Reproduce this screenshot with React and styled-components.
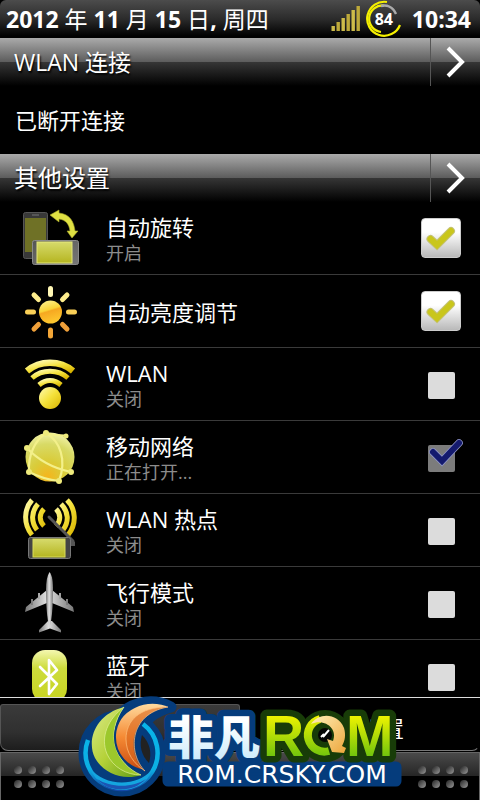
import React from 'react';
import styled, { createGlobalStyle } from 'styled-components';

const GlobalStyle = createGlobalStyle`
  * {
    box-sizing: border-box;
  }

  body {
    margin: 0;
    background: #000;
    color: #fff;
    font-family: 'Open Sans', 'Noto Sans CJK SC', sans-serif;
  }
`

const Screen = styled.div`
  position: relative;
  display: flex;
  flex-direction: column;
  height: 100vh;
  overflow: hidden;
`

const StatusBar = styled.header`
  display: flex;
  align-items: center;
  flex: none;
  height: 38px;
  padding: 0 9px 0 6px;
  border-radius: 6px 6px 0 0;
  background: linear-gradient(#4c4c4c, #2b2b2b 50%, #000 95%);
  font-size: 23px;
  line-height: 38px;
  white-space: nowrap;
`

const DateText = styled.div`
  flex: 1;

  b {
    font-weight: 700;
  }
`

const Clock = styled.b`
  margin-left: 9px;
`

const Battery = styled.div`
  display: grid;
  place-items: center;
  width: 38px;
  height: 38px;
  margin-left: 4px;
  font-size: 16px;
  font-weight: 700;

  > * {
    grid-area: 1 / 1;
  }
`

const SectionBar = styled.div`
  display: flex;
  flex: none;
  height: 48px;
  background: linear-gradient(#aaa, #5c5c5c 50%, #363636 50%, #000);
`

const SectionTitle = styled.h2`
  flex: 1;
  margin: 0;
  padding-left: 14px;
  font-size: ${props => props.$latin ? 23 : 24}px;
  font-weight: 400;
  line-height: 48px;
  text-shadow: 1px 2px 2px #000;
`

const MoreButton = styled.button`
  display: grid;
  place-items: center;
  width: 50px;
  padding: 0;
  border: 0;
  border-left: 1px solid #555;
  background: none;
`

const Connection = styled.p`
  flex: none;
  margin: 0;
  padding: 0 15px;
  height: 68px;
  font-size: 22px;
  line-height: 68px;
`

const List = styled.main`
  flex: 1;
  min-height: 0;
  overflow: hidden;
`

const Row = styled.label`
  display: flex;
  align-items: center;
  height: 73px;
  padding: 0 19px 0 20px;
  border-bottom: 1px solid #3a3a3a;
`

const RowText = styled.span`
  flex: 1;
  display: flex;
  flex-direction: column;
  margin-left: 26px;
  padding-top: 2px;
`

const Title = styled.span`
  font-size: 22px;
  line-height: 28px;
`

const Note = styled.span`
  font-size: 18px;
  line-height: 24px;
  color: #8c8c8c;
`

const CheckSlot = styled.span`
  position: relative;
  display: grid;
  place-items: center;
  width: 40px;
  height: 40px;

  svg {
    position: absolute;
    inset: 0;
    overflow: visible;
    pointer-events: none;
  }
`

const Check = styled.input`
  appearance: none;
  width: 27px;
  height: 27px;
  margin: 2px 0 0;
  border-radius: 2px;
  background: #dcdcdc;

  &:checked {
    width: 40px;
    height: 40px;
    margin: 0;
    border: 1px solid #ccc;
    border-radius: 4px;
    background: linear-gradient(#fff 35%, #b9b9b9);
  }

  &:disabled {
    width: 27px;
    height: 27px;
    margin: 2px 0 0;
    border: 0;
    border-radius: 2px;
    background: #7c7c7c;
  }
`

const Tabs = styled.nav`
  display: flex;
  flex: none;
  height: 55px;
  padding: 6px 0 1px;
  border-top: 1px solid #ddd;
`

const Tab = styled.button`
  flex: 1;
  padding: 0;
  border: 1px solid ${props => props.$active ? '#555' : '#000'};
  border-bottom-color: #777;
  border-radius: 3px 3px 8px 8px;
  background: ${props => props.$active ? 'linear-gradient(#3a3a3a, #303030 60%, #1d1d1d)' : '#000'};
  color: #fff;
  font-family: inherit;
  font-size: 22px;
  line-height: 44px;
`

const Tray = styled.footer`
  display: flex;
  justify-content: space-between;
  flex: none;
  height: 48px;
  padding: 13px 11px 0;
  border: 1px solid #666;
  border-bottom: 0;
  background: linear-gradient(#4a4a4a, #262626 48%, #000 48%);
`

const Grip = styled.span`
  display: grid;
  grid-template-columns: repeat(4, 8px);
  grid-auto-rows: 8px;
  gap: 6px;
  padding-left: 2px;
`

const Dot = styled.i`
  border-radius: 50%;
  background: linear-gradient(135deg, #222, #999);
`

const Brand = styled.svg`
  position: absolute;
  left: 50%;
  bottom: 0;
  transform: translateX(-50%);
`

const Defs = () => (
  <svg width="0" height="0" style={{ position: 'absolute' }} aria-hidden="true">
    <defs>
      <linearGradient id="gold" x1="0" y1="0" x2="1" y2="1">
        <stop offset="0" stopColor="#fffbb0" />
        <stop offset=".5" stopColor="#f4e13a" />
        <stop offset="1" stopColor="#d9b400" />
      </linearGradient>
      <linearGradient id="sun" x1="0" y1="0" x2=".3" y2="1">
        <stop offset="0" stopColor="#fff59a" />
        <stop offset=".48" stopColor="#fbd436" />
        <stop offset=".55" stopColor="#f6a821" />
        <stop offset="1" stopColor="#fdc52e" />
      </linearGradient>
      <linearGradient id="glass" x1="0" y1="0" x2="0" y2="1">
        <stop offset="0" stopColor="#d6da6b" />
        <stop offset="1" stopColor="#b5b520" />
      </linearGradient>
      <linearGradient id="case" x1="0" y1="0" x2="1" y2="1">
        <stop offset="0" stopColor="#555" />
        <stop offset="1" stopColor="#777" />
      </linearGradient>
      <radialGradient id="globe" cx=".45" cy=".9" r=".95">
        <stop offset="0" stopColor="#f5b51c" />
        <stop offset=".35" stopColor="#d9cc3a" />
        <stop offset=".7" stopColor="#d8da66" />
        <stop offset="1" stopColor="#f6f6b4" />
      </radialGradient>
      <linearGradient id="metal" x1="0" y1="0" x2="1" y2="0">
        <stop offset="0" stopColor="#777" />
        <stop offset=".45" stopColor="#e2e2e2" />
        <stop offset="1" stopColor="#777" />
      </linearGradient>
      <linearGradient id="lime" x1="0" y1="0" x2="0" y2="1">
        <stop offset="0" stopColor="#f4f7b0" />
        <stop offset=".35" stopColor="#cddc3c" />
        <stop offset="1" stopColor="#c8d420" />
      </linearGradient>
    </defs>
  </svg>
)

const Icon = ({ children }) => (
  <svg width="60" height="64" viewBox="0 0 60 64" fill="none" aria-hidden="true">{children}</svg>
)

const RotateIcon = () => (
  <Icon>
    <rect x="3.500" y="6.500" width="24" height="46" rx="2" fill="#383838" stroke="#555" />
    <rect x="5" y="12" width="21" height="34" fill="#6f7126" />
    <path d="M12 9h7" stroke="#777" />
    <rect x="12.500" y="34.500" width="46" height="24" rx="2" fill="url(#case)" stroke="#8a8a8a" />
    <rect x="17" y="36" width="35" height="21" fill="url(#glass)" stroke="#e5e87b" />
    <path d="M30 9l9-5v3c11 1 15 9 16 18h3l-6 7-5-7h3c-1-7-4-11-11-12v3z" fill="#dfe043" stroke="#a9a92a" strokeWidth=".6" />
  </Icon>
)

const BrightnessIcon = () => (
  <Icon>
    <circle cx="30.500" cy="33" r="11.500" fill="url(#sun)" />
    <g strokeWidth="5" strokeLinecap="round">
      <path d="M30.500 9.500v6" stroke="#fff7b5" />
      <path d="M14 16l4.500 4.500M47 16l-4.500 4.500" stroke="#fdec8c" />
      <path d="M7.500 33h6M48.500 33h6" stroke="#f9cf57" />
      <path d="M14 50l4.500-4.500M47 50l-4.500-4.500" stroke="#f0a03a" />
      <path d="M30.500 51v6" stroke="#f3a637" />
    </g>
  </Icon>
)

const WifiIcon = () => (
  <Icon>
    <circle cx="30" cy="46" r="11" fill="url(#gold)" />
    <g stroke="url(#gold)" strokeWidth="5">
      <path d="M7 19c13-11 33-11 46 0" strokeWidth="6.500" />
      <path d="M12 26c10-9 26-9 36 0" />
      <path d="M19 33c7-6 15-6 22 0" />
    </g>
  </Icon>
)

const GlobeIcon = () => (
  <Icon>
    <circle cx="30" cy="32" r="24.500" fill="url(#globe)" />
    <g stroke="#f3f08a" strokeWidth="2.200">
      <path d="M7 23c12 13 25 20 44 24" />
      <path d="M26 8c14 8 21 27 13 48" />
      <path d="M26 8C15 15 8 30 9 47" />
      <path d="M26 8c8 3 17 2 20 3" />
      <path d="M9 47c8 4 20 8 30 9" />
    </g>
    <g fill="#eeea7c">
      <circle cx="26" cy="8" r="3" />
      <circle cx="46" cy="11" r="2.500" />
      <circle cx="7" cy="23" r="3" />
      <circle cx="9" cy="47" r="3" />
      <circle cx="51" cy="47" r="3" />
      <circle cx="39" cy="56" r="3" />
    </g>
  </Icon>
)

const HotspotIcon = () => (
  <Icon>
    <g stroke="url(#gold)" strokeWidth="5">
      <path d="M12 2C4 11 3 26 12 37M18 6c-7 8-7 18-1 26M24 11c-5 5-5 12 0 17" />
      <path d="M47 2c9 9 10 24 1 35M41 6c8 8 8 18 2 26M36 11c5 5 5 12 0 17" />
    </g>
    <path d="M29 19l24 24" stroke="#555" strokeWidth="3" strokeLinecap="round" />
    <path d="M46 36l9 8v4h-6z" fill="#555" />
    <rect x="8.500" y="39.500" width="42" height="21" rx="2" fill="#444" stroke="#777" />
    <rect x="13" y="41" width="32" height="18" fill="url(#glass)" stroke="#dadd5a" />
  </Icon>
)

const PlaneIcon = () => (
  <Icon>
    <g fill="url(#metal)">
      <path d="M27 19L6 36l-1 5 22-9zM32 19l21 17 1 5-22-9z" />
      <path d="M11 28h2v6h-2zM18 22h2v6h-2zM46 28h2v6h-2zM39 22h2v6h-2z" />
      <path d="M28 50l-9 9v2.500l11-4 11 4V59l-9-9z" />
      <path d="M29.500 1c3 4 3.500 10 3.500 18 0 15-1 29-3.500 38C27 48 26 34 26 19c0-8 1-14 3.500-18z" />
    </g>
  </Icon>
)

const BluetoothIcon = () => (
  <Icon>
    <rect x="12" y="6" width="35" height="52" rx="13" fill="url(#lime)" />
    <path d="M20 23l17 17-8 10V16l8 10-17 16" stroke="#fff" strokeWidth="2.600" strokeLinejoin="round" strokeLinecap="round" />
  </Icon>
)

const Tick = ({ dark }) => dark ? (
  <svg viewBox="0 0 40 40" fill="none" aria-hidden="true">
    <path d="M12 15l9 9L38 6" stroke="#8d93c4" strokeWidth="7.600" strokeLinecap="round" />
    <path d="M12 15l9 9L38 6" stroke="#141a6e" strokeWidth="6" strokeLinecap="round" />
  </svg>
) : (
  <svg viewBox="0 0 40 40" fill="none" aria-hidden="true">
    <path d="M9.500 21l6.500 6 14-14" stroke="#c4c27a" strokeWidth="8" strokeLinecap="round" />
    <path d="M9.500 21l6.500 6 14-14" stroke="#c9c61c" strokeWidth="6" strokeLinecap="round" />
  </svg>
)

const Setting = ({ icon, title, note, checked, disabled }) => (
  <Row>
    {icon}
    <RowText>
      <Title>{title}</Title>
      {note && <Note>{note}</Note>}
    </RowText>
    <CheckSlot>
      <Check type="checkbox" defaultChecked={checked} disabled={disabled} />
      {checked && <Tick dark={disabled} />}
    </CheckSlot>
  </Row>
)

const Section = ({ title, latin }) => (
  <SectionBar>
    <SectionTitle $latin={latin}>{title}</SectionTitle>
    <MoreButton aria-label={title}>
      <svg width="24" height="34" viewBox="0 0 24 34" fill="none">
        <path d="M4 3l14 14L4 31" stroke="#fff" strokeWidth="4" />
      </svg>
    </MoreButton>
  </SectionBar>
)

const Signal = () => (
  <svg width="30" height="26" viewBox="0 0 30 26" aria-hidden="true">
    {[5, 9, 13, 17, 21, 25].map((height, i) => (
      <rect key={height} x={i * 5 + 0.5} y={25 - height} width="3.400" height={height} fill={i % 2 ? '#bda93a' : '#cdbb4a'} />
    ))}
  </svg>
)

const Dots = () => (
  <Grip>
    {[...Array(8).keys()].map(i => <Dot key={i} />)}
  </Grip>
)

const Logo = () => (
  <Brand width="324" height="105" viewBox="78 695 324 105" fill="none">
    <defs>
      <linearGradient id="ring" x1="0" y1="0" x2="0" y2="1">
        <stop offset="0" stopColor="#08b4ea" />
        <stop offset=".7" stopColor="#0cb0e4" />
        <stop offset="1" stopColor="#1248a8" />
      </linearGradient>
      <linearGradient id="leaf" x1="0" y1="0" x2="1" y2="1">
        <stop offset="0" stopColor="#dcea8a" />
        <stop offset=".5" stopColor="#b4d138" />
        <stop offset="1" stopColor="#5f9c16" />
      </linearGradient>
      <linearGradient id="flame" x1="0" y1="0" x2="0" y2="1">
        <stop offset="0" stopColor="#ffdca0" />
        <stop offset=".5" stopColor="#f58a34" />
        <stop offset="1" stopColor="#c84a10" />
      </linearGradient>
      <linearGradient id="ice" x1="0" y1="0" x2="0" y2="1">
        <stop offset=".3" stopColor="#fff" />
        <stop offset="1" stopColor="#c4e8fb" />
      </linearGradient>
      <linearGradient id="green" gradientUnits="userSpaceOnUse" x1="0" y1="714" x2="0" y2="757">
        <stop offset="0" stopColor="#f4f500" />
        <stop offset="1" stopColor="#6fc30d" />
      </linearGradient>
      <linearGradient id="arrow" x1="0" y1="0" x2="1" y2="1">
        <stop offset="0" stopColor="#fff0b8" />
        <stop offset="1" stopColor="#eda63c" />
      </linearGradient>
    </defs>

    <g fill="#053c7c" stroke="#053c7c" strokeWidth="11" strokeLinejoin="round">
      <circle cx="122" cy="753" r="38" />
      <path d="M171 707C150 696 126 704 116 720l20 15c8-16 20-24 35-28z" />
      <path d="M168 767h228v14H168z" />
    </g>
    <path d="M142 735c8 8 10 18 7 28-8-8-10-18-7-28z" fill="#222" />
    <path d="M143 724a36 36 0 1 1-55 16" stroke="url(#ring)" strokeWidth="4.500" />
    <path d="M90 768c14 18 45 20 62 2-8 26-51 28-62-2z" fill="#14a5df" />
    <path d="M97 779c14 9 36 9 49 0-13 14-37 14-49 0z" fill="#1c55b4" />
    <path d="M124 707c-28 7-38 33-29 51 8 15 28 23 46 17-25-11-37-40-17-68z" fill="url(#leaf)" />
    <path d="M124 707c-16 12-24 30-17 47 6 13 19 21 34 21-25-11-37-40-17-68z" fill="#9cc82c" stroke="#e0ef96" strokeWidth=".7" />
    <path d="M171 707c-25-11-54 2-56 28-1 20 13 33 30 36-17-17-17-57 26-64z" fill="url(#flame)" stroke="#053c7c" strokeWidth="2" />
    <path d="M168 707c-29 0-42 14-42 32 0 14 8 25 19 32-17-17-17-57 23-64z" fill="#d9651c" fillOpacity=".6" stroke="#ffc27e" strokeWidth=".7" />

    <text x="168" y="754" fontFamily="Noto Sans CJK SC" fontWeight="900" fontSize="46" fill="url(#ice)" stroke="#053c7c" strokeWidth="13" strokeLinejoin="round" paintOrder="stroke">非凡</text>

    <circle cx="325" cy="736" r="17" stroke="#183c08" strokeWidth="18" />
    <g fill="url(#green)" stroke="#183c08" strokeWidth="13" strokeLinejoin="round" paintOrder="stroke" fontFamily="Liberation Sans" fontWeight="700" fontSize="57">
      <text x="263" y="756">R</text>
      <text x="346" y="756">M</text>
    </g>
    <circle cx="325" cy="735" r="12" fill="#183c08" />
    <circle cx="325" cy="735" r="7" fill="#050505" />
    <path d="M321 737l3-3M323 737l6-7" stroke="#fff" strokeWidth="2" />
    <path d="M320 719a16.500 16.500 0 1 0 9 32" stroke="url(#green)" strokeWidth="8" />
    <path d="M311 724c8-12 27-11 33 4 2 7 1 13-2 18l4 2-2 5-12-1-5-13 6 2c5-12-8-23-22-17z" fill="url(#arrow)" />

    <text x="282" y="783" textAnchor="middle" fontFamily="DejaVu Sans" fontSize="25" fill="#fff">ROM.CRSKY.COM</text>
  </Brand>
)

export default () => (
  <Screen>
    <GlobalStyle />
    <Defs />
    <StatusBar>
      <DateText><b>2012</b> 年 <b>11</b> 月 <b>15</b> 日<b>,</b> 周四</DateText>
      <Signal />
      <Battery>
        <svg width="38" height="38" viewBox="0 0 38 38" fill="none" aria-hidden="true">
          <path d="M22 2a17 17 0 1 0 13 23" stroke="#f5f000" strokeWidth="2.200" />
          <path d="M19 5.500a13 13 0 0 0-3 26.500" stroke="#f5f000" strokeWidth="2.200" />
          <path d="M16 6c6-1.500 12 1 15 8" stroke="#aaa" strokeWidth="2.400" />
        </svg>
        <span>84</span>
      </Battery>
      <Clock>10:34</Clock>
    </StatusBar>

    <Section title="WLAN 连接" latin />
    <Connection>已断开连接</Connection>
    <Section title="其他设置" />

    <List>
      <Setting icon={<RotateIcon />} title="自动旋转" note="开启" checked />
      <Setting icon={<BrightnessIcon />} title="自动亮度调节" checked />
      <Setting icon={<WifiIcon />} title="WLAN" note="关闭" />
      <Setting icon={<GlobeIcon />} title="移动网络" note="正在打开..." checked disabled />
      <Setting icon={<HotspotIcon />} title="WLAN 热点" note="关闭" />
      <Setting icon={<PlaneIcon />} title="飞行模式" note="关闭" />
      <Setting icon={<BluetoothIcon />} title="蓝牙" note="关闭" />
    </List>

    <Tabs>
      <Tab $active aria-label="通知" />
      <Tab>快速设置</Tab>
    </Tabs>
    <Tray>
      <Dots />
      <Dots />
    </Tray>
    <Logo />
  </Screen>
)
